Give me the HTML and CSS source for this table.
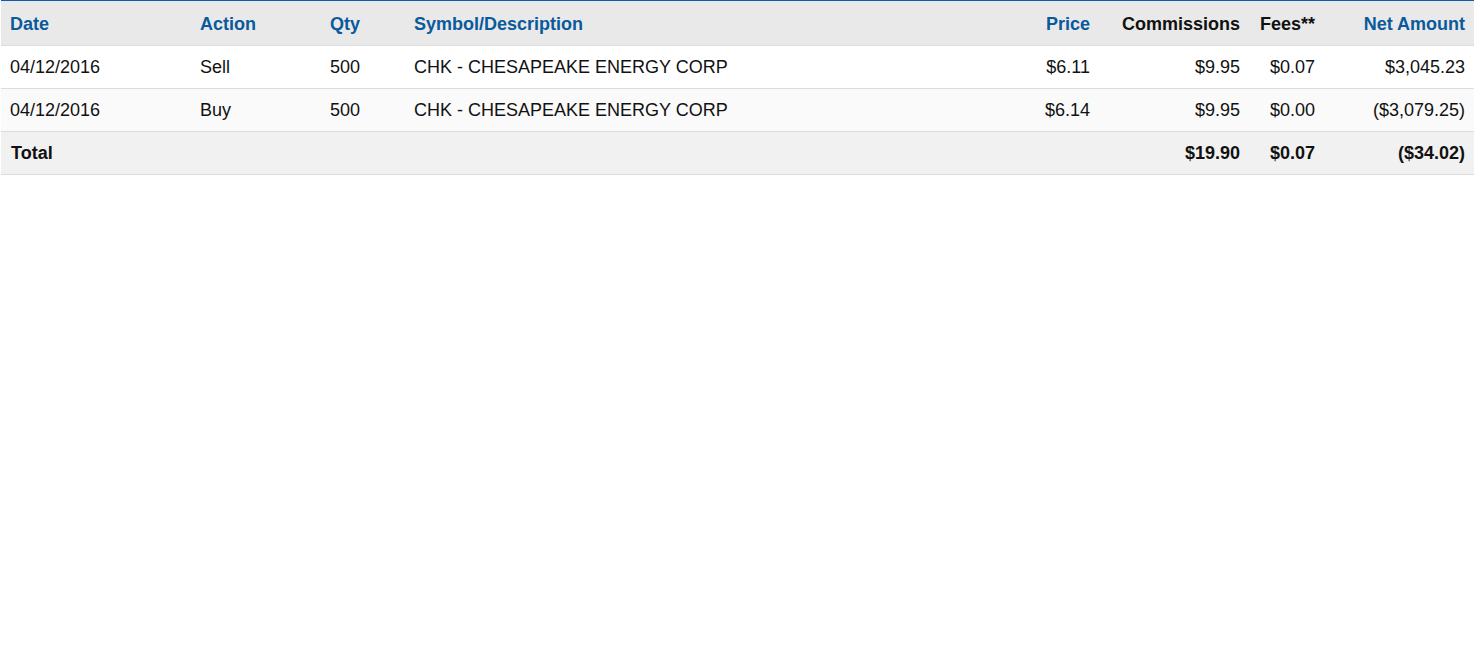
FILE: index.html
```html
<!DOCTYPE html>
<html>
<head>
<meta charset="utf-8">
<link rel="stylesheet" href="styles.css">
</head>
<body>
<table class="trades">
  <colgroup>
    <col class="c-date"><col class="c-action"><col class="c-qty"><col class="c-sym"><col class="c-price"><col class="c-comm"><col class="c-fees"><col class="c-net">
  </colgroup>
  <thead>
    <tr>
      <th class="sort">Date</th>
      <th class="sort">Action</th>
      <th class="sort">Qty</th>
      <th class="sort">Symbol/Description</th>
      <th class="sort num">Price</th>
      <th class="num">Commissions</th>
      <th class="num">Fees**</th>
      <th class="sort num">Net Amount</th>
    </tr>
  </thead>
  <tbody>
    <tr class="row-a">
      <td>04/12/2016</td><td>Sell</td><td>500</td><td>CHK - CHESAPEAKE ENERGY CORP</td>
      <td class="num">$6.11</td><td class="num">$9.95</td><td class="num">$0.07</td><td class="num">$3,045.23</td>
    </tr>
    <tr class="row-b">
      <td>04/12/2016</td><td>Buy</td><td>500</td><td>CHK - CHESAPEAKE ENERGY CORP</td>
      <td class="num">$6.14</td><td class="num">$9.95</td><td class="num">$0.00</td><td class="num">($3,079.25)</td>
    </tr>
  </tbody>
  <tfoot>
    <tr class="total">
      <td>Total</td><td></td><td></td><td></td><td></td>
      <td class="num">$19.90</td><td class="num">$0.07</td><td class="num">($34.02)</td>
    </tr>
  </tfoot>
</table>
</body>
</html>
```
FILE: styles.css
```css
html, body {
  margin: 0;
  padding: 0;
  background: #fff;
}
body {
  font-family: "Liberation Sans", Arial, sans-serif;
  font-size: 18px;
  color: #111;
}
.trades {
  margin-left: 1px;
  width: 1473px;
  table-layout: fixed;
  border-collapse: collapse;
  border-top: 1px solid #0b5ea3;
}
.c-date { width: 190px; }
.c-action { width: 130px; }
.c-qty { width: 84px; }
.c-sym { width: 594px; }
.c-price { width: 100px; }
.c-comm { width: 150px; }
.c-fees { width: 75px; }
.c-net { width: 150px; }
.trades th,
.trades td {
  padding: 0 9px;
  text-align: left;
  white-space: nowrap;
  border-bottom: 1px solid #dcdcdc;
}
.trades th {
  height: 42px;
  padding-top: 2px;
  background: #e9e9e9;
  font-weight: bold;
  color: #111;
}
.trades th.sort {
  color: #0a5a9c;
}
.trades td {
  height: 41px;
  padding-top: 1px;
}
.trades .num {
  text-align: right;
}
.row-a td { background: #fff; }
.row-b td { background: #fafafa; }
.total td {
  background: #f1f1f1;
  font-weight: bold;
}
.total td:first-child {
  padding-left: 10px;
}
```
